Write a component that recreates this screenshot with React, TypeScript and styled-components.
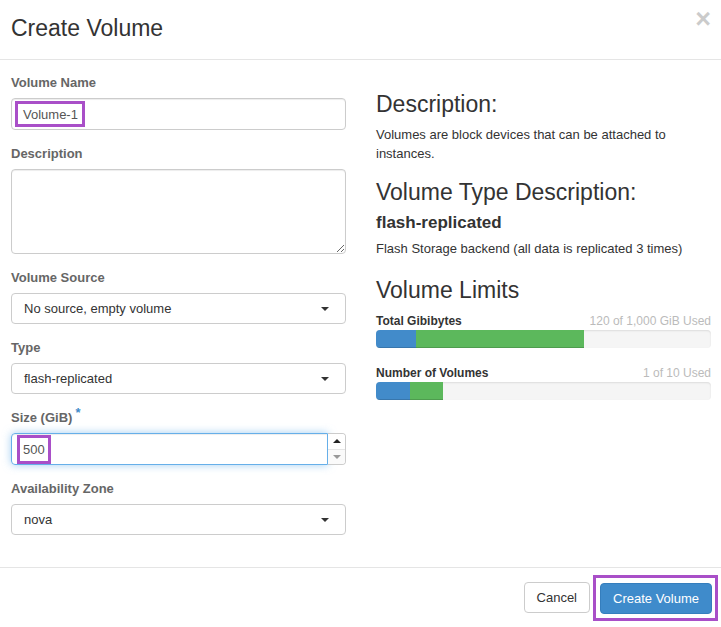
import React from "react";
import styled, { createGlobalStyle } from "styled-components";

const Global = createGlobalStyle`
  html, body { margin: 0; padding: 0; background: #fff; }
  body { font-family: "Liberation Sans", Arial, Helvetica, sans-serif; font-size: 13px; color: #333; }
  * { box-sizing: border-box; }
`;

const Modal = styled.div`
  width: 721px;
  height: 627px;
  display: flex;
  flex-direction: column;
  background: #fff;
`;

const Header = styled.div`
  height: 60px;
  border-bottom: 1px solid #e5e5e5;
  display: flex;
  justify-content: space-between;
  align-items: flex-start;
  padding: 0 11px;
`;

const Title = styled.h4`
  margin: 16px 0 0;
  font-size: 23px;
  line-height: 25px;
  font-weight: normal;
  color: #333;
`;

const Close = styled.span`
  margin: 6px -1px 0 0;
  font-size: 27px;
  font-weight: bold;
  line-height: 27px;
  color: #000;
  opacity: 0.2;
`;

const Body = styled.div`
  flex: 1;
  display: grid;
  grid-template-columns: 335px 335px;
  column-gap: 30px;
  padding: 14px 10px 0 11px;
  align-items: start;
`;

const Column = styled.div`
  display: flex;
  flex-direction: column;
`;

const Group = styled.div`
  display: flex;
  flex-direction: column;
  margin-bottom: 15px;
`;

const Label = styled.label`
  display: block;
  font-size: 13px;
  font-weight: bold;
  line-height: 18px;
  color: #666;
  margin-bottom: 6px;
`;

const Required = styled.span`
  position: relative;
  top: -5px;
  line-height: 0;
  color: #428bca;
  font-size: 13px;
  margin-left: 3px;
`;

const TextBox = styled.div`
  height: 32px;
  border: 1px solid #ccc;
  border-radius: 4px;
  box-shadow: inset 0 1px 1px rgba(0, 0, 0, 0.075);
  padding: 0 3px;
  display: flex;
  align-items: center;
  color: #555;
  font-size: 13px;
`;

const Mark = styled.span<{ $px?: string; $h?: number }>`
  display: inline-flex;
  align-items: center;
  border: 3px solid #a94fc8;
  padding: ${(p) => p.$px || "0 4px 0 5px"};
  height: ${(p) => p.$h ?? 26}px;
`;

const TextArea = styled.textarea`
  display: block;
  width: 100%;
  height: 85px;
  border: 1px solid #ccc;
  border-radius: 4px;
  box-shadow: inset 0 1px 1px rgba(0, 0, 0, 0.075);
  font-family: inherit;
  font-size: 13px;
  padding: 6px 12px;
  margin: 0;
  resize: vertical;
  outline: none;
`;

const SelectBox = styled.div`
  height: 31px;
  border: 1px solid #ccc;
  border-radius: 4px;
  padding: 0 16px 0 12px;
  display: flex;
  align-items: center;
  justify-content: space-between;
  color: #333;
  font-size: 13px;
`;

const Caret = styled.span`
  width: 0;
  height: 0;
  border-left: 4px solid transparent;
  border-right: 4px solid transparent;
  border-top: 4px solid #333;
`;

const NumberRow = styled.div`
  display: flex;
  height: 32px;
`;

const NumberBox = styled.div`
  flex: 1;
  border: 1px solid #66afe9;
  border-radius: 4px 0 0 4px;
  box-shadow: inset 0 1px 1px rgba(0, 0, 0, 0.075), 0 0 8px rgba(102, 175, 233, 0.6);
  padding: 1px 5px;
  display: flex;
  align-items: flex-start;
  color: #555;
`;

const Spinner = styled.div`
  width: 18px;
  display: flex;
  flex-direction: column;
  border: 1px solid #ccc;
  border-left: none;
  border-radius: 0 4px 4px 0;
  overflow: hidden;
`;

const SpinHalf = styled.div<{ $down?: boolean }>`
  flex: 1;
  display: flex;
  align-items: center;
  justify-content: center;
  background: ${(p) => (p.$down ? "#fafafa" : "#fff")};
  border-top: ${(p) => (p.$down ? "1px solid #e6e6e6" : "none")};
`;

const Arrow = styled.span<{ $down?: boolean }>`
  width: 0;
  height: 0;
  border-left: 4px solid transparent;
  border-right: 4px solid transparent;
  ${(p) =>
    p.$down
      ? "border-top: 4px solid #999;"
      : "border-bottom: 4px solid #222;"}
`;

const Heading = styled.h3<{ $mt: number; $mb: number }>`
  margin: ${(p) => p.$mt}px 0 ${(p) => p.$mb}px;
  font-size: 23px;
  line-height: 25px;
  font-weight: normal;
  color: #333;
`;

const SubHeading = styled.h4`
  margin: 8px 0 7px;
  font-size: 17px;
  line-height: 19px;
  font-weight: bold;
  color: #333;
`;

const Text = styled.p`
  margin: 0;
  font-size: 13px;
  line-height: 19px;
  color: #333;
`;

const LimitRow = styled.div`
  display: flex;
  justify-content: space-between;
  font-size: 12px;
  line-height: 17px;
`;

const LimitName = styled.span`
  font-weight: bold;
  color: #333;
`;

const LimitValue = styled.span`
  color: #bbb;
`;

const Bar = styled.div<{ $mb?: number }>`
  display: flex;
  height: 18px;
  margin-bottom: ${(p) => p.$mb ?? 0}px;
  background: #f5f5f5;
  border-radius: 4px;
  overflow: hidden;
  box-shadow: inset 0 1px 2px rgba(0, 0, 0, 0.1);
`;

const Segment = styled.div<{ $color: string }>`
  height: 100%;
  background: ${(p) => p.$color};
  box-shadow: inset 0 -1px 0 rgba(0, 0, 0, 0.15);
`;

const Footer = styled.div`
  height: 60px;
  border-top: 1px solid #e5e5e5;
  display: flex;
  align-items: center;
  justify-content: flex-end;
  gap: 3px;
  padding-right: 3px;
`;

const Button = styled.button<{ $primary?: boolean }>`
  height: 31px;
  padding: 0 12px;
  font-family: inherit;
  font-size: 13px;
  border-radius: 4px;
  border: 1px solid ${(p) => (p.$primary ? "#357ebd" : "#ccc")};
  background: ${(p) => (p.$primary ? "#3f8bcb" : "#fff")};
  color: ${(p) => (p.$primary ? "#fff" : "#333")};
  cursor: pointer;
`;

const ButtonMark = styled.span`
  display: inline-flex;
  border: 3px solid #a94fc8;
  padding: 5px 3px 4px 4px;
`;

const limits = [
  { name: "Total Gibibytes", value: "120 of 1,000 GiB Used", used: 12, added: 50 },
  { name: "Number of Volumes", value: "1 of 10 Used", used: 10, added: 10 },
];

const selects = [
  { label: "Volume Source", value: "No source, empty volume" },
  { label: "Type", value: "flash-replicated" },
];

export default function App() {
  return (
    <>
      <Global />
      <Modal>
        <Header>
          <Title>Create Volume</Title>
          <Close>×</Close>
        </Header>
        <Body>
          <Column>
            <Group>
              <Label>Volume Name</Label>
              <TextBox>
                <Mark>Volume-1</Mark>
              </TextBox>
            </Group>
            <Group>
              <Label>Description</Label>
              <TextArea defaultValue="" />
            </Group>
            {selects.map((s) => (
              <Group key={s.label}>
                <Label>{s.label}</Label>
                <SelectBox>
                  <span>{s.value}</span>
                  <Caret />
                </SelectBox>
              </Group>
            ))}
            <Group>
              <Label>
                Size (GiB)<Required>*</Required>
              </Label>
              <NumberRow>
                <NumberBox>
                  <Mark $px="0 3px" $h={29}>500</Mark>
                </NumberBox>
                <Spinner>
                  <SpinHalf>
                    <Arrow />
                  </SpinHalf>
                  <SpinHalf $down>
                    <Arrow $down />
                  </SpinHalf>
                </Spinner>
              </NumberRow>
            </Group>
            <Group>
              <Label>Availability Zone</Label>
              <SelectBox>
                <span>nova</span>
                <Caret />
              </SelectBox>
            </Group>
          </Column>
          <Column>
            <Heading $mt={18} $mb={8}>Description:</Heading>
            <Text>Volumes are block devices that can be attached to instances.</Text>
            <Heading $mt={17} $mb={0}>Volume Type Description:</Heading>
            <SubHeading>flash-replicated</SubHeading>
            <Text>Flash Storage backend (all data is replicated 3 times)</Text>
            <Heading $mt={20} $mb={10}>Volume Limits</Heading>
            {limits.map((l, i) => (
              <React.Fragment key={l.name}>
                <LimitRow>
                  <LimitName>{l.name}</LimitName>
                  <LimitValue>{l.value}</LimitValue>
                </LimitRow>
                <Bar $mb={i === 0 ? 17 : 0}>
                  <Segment $color="#428bca" style={{ width: `${l.used}%` }} />
                  <Segment $color="#5cb85c" style={{ width: `${l.added}%` }} />
                </Bar>
              </React.Fragment>
            ))}
          </Column>
        </Body>
        <Footer>
          <Button>Cancel</Button>
          <ButtonMark>
            <Button $primary>Create Volume</Button>
          </ButtonMark>
        </Footer>
      </Modal>
    </>
  );
}
